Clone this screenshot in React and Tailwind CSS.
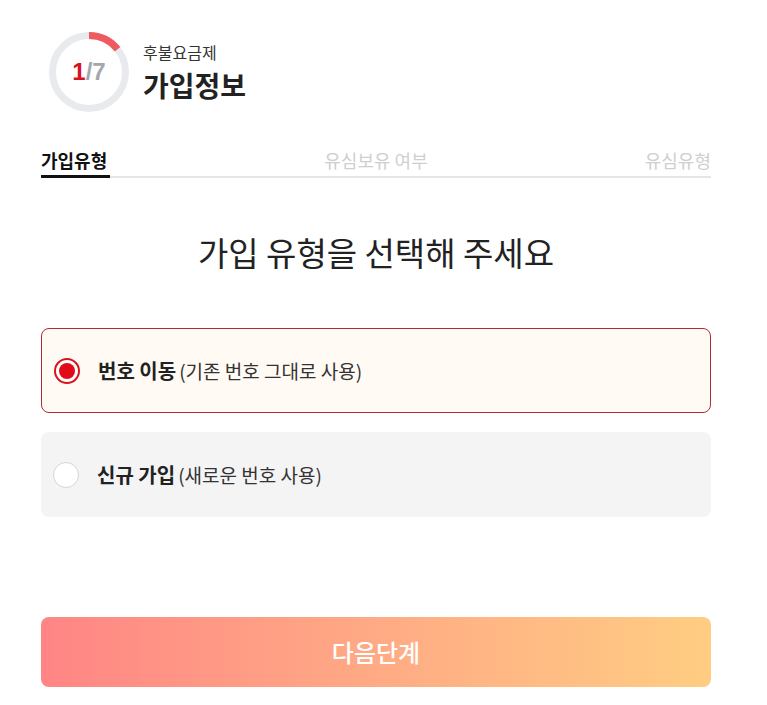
import React from "react";

const font = { fontFamily: '"Noto Sans CJK KR", "Noto Sans", sans-serif' };

function Progress() {
  const r = 36.5;
  const c = 2 * Math.PI * r;
  return (
    <div className="relative w-[80px] h-[80px] shrink-0">
      <svg width="80" height="80" viewBox="0 0 80 80" className="absolute inset-0">
        <circle cx="40" cy="40" r={r} fill="none" stroke="#e8eaed" strokeWidth="7" />
        <circle
          cx="40"
          cy="40"
          r={r}
          fill="none"
          stroke="#ee5a5f"
          strokeWidth="7"
          strokeDasharray={`${c / 7} ${c}`}
          transform="rotate(-90 40 40)"
        />
      </svg>
      <div className="absolute inset-0 flex items-center justify-center text-[24px] font-bold leading-none" style={{ fontFamily: '"Liberation Sans", Arial, sans-serif' }}>
        <span className="text-[#d7141e]">1</span>
        <span className="text-[#a3a7ad]">/7</span>
      </div>
    </div>
  );
}

function Radio({ checked }) {
  return checked ? (
    <div className="w-[26px] h-[26px] rounded-full border-[2px] border-[#d7141e] bg-white flex items-center justify-center">
      <div className="w-[16px] h-[16px] rounded-full bg-[#e00a18]" />
    </div>
  ) : (
    <div className="w-[26px] h-[26px] rounded-full border border-[#d5d5d5] bg-white" />
  );
}

export default function App() {
  return (
    <div className="w-[767px] h-[705px] bg-white text-[#222]" style={font}>
      <div className="ml-[41px] w-[670px] pt-[32px]">
        <div className="flex items-center gap-[14px] ml-[8px]">
          <Progress />
          <div className="flex flex-col">
            <div className="text-[16px] leading-[20px] text-[#333]">후불요금제</div>
            <div className="text-[28px] font-bold leading-[36px] mt-[5px] text-[#222]">가입정보</div>
          </div>
        </div>

        <div className="mt-[36px] relative">
          <div className="flex justify-between items-end text-[18px] leading-[24px] pb-[4px]">
            <span className="font-bold text-[#111]">가입유형</span>
            <span className="text-[#cfcfcf]">유심보유 여부</span>
            <span className="text-[#cfcfcf]">유심유형</span>
          </div>
          <div className="h-[2px] bg-[#e5e5e5]" />
          <div className="absolute left-0 bottom-0 w-[69px] h-[3px] bg-[#111]" />
        </div>

        <div className="mt-[54px] text-center text-[33px] leading-[40px] text-[#222]">
          가입 유형을 선택해 주세요
        </div>

        <div className="mt-[56px] flex flex-col gap-[19px]">
          <div className="h-[85px] rounded-[8px] border border-[#b22a37] bg-[#fffaf3] flex items-center pl-[12px] gap-[18px]">
            <Radio checked />
            <div className="flex items-baseline">
              <span className="text-[20px] font-bold text-[#222]">번호 이동</span>
              <span className="text-[19px] text-[#333] ml-[3px]">(기존 번호 그대로 사용)</span>
            </div>
          </div>
          <div className="h-[85px] rounded-[8px] bg-[#f4f4f4] flex items-center pl-[12px] gap-[18px]">
            <Radio />
            <div className="flex items-baseline">
              <span className="text-[20px] font-bold text-[#222]">신규 가입</span>
              <span className="text-[19px] text-[#333] ml-[3px]">(새로운 번호 사용)</span>
            </div>
          </div>
        </div>

        <div className="mt-[100px] h-[70px] rounded-[8px] bg-gradient-to-r from-[#ff8585] to-[#ffcd82] flex items-center justify-center text-white text-[24px] font-medium">
          다음단계
        </div>
      </div>
    </div>
  );
}
